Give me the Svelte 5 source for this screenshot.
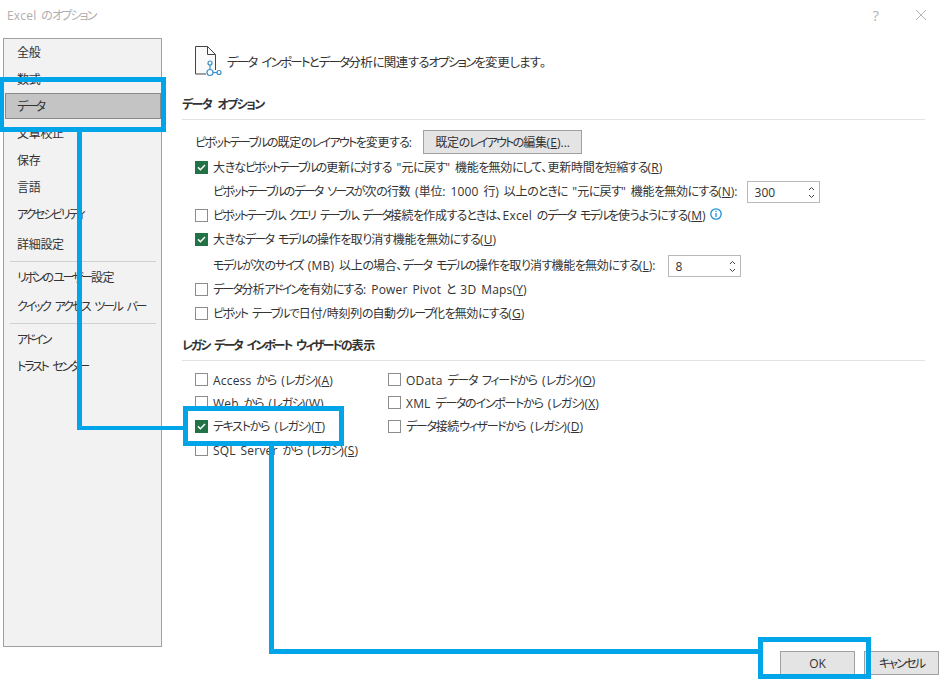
<script lang="ts">
  const navTop = [
    { label: "全般" },
    { label: "数式" },
    { label: "データ", active: true },
    { label: "文章校正" },
    { label: "保存" },
    { label: "言語" },
    { label: "アクセシビリティ" },
    { label: "詳細設定", cls: "gap" },
  ];
  const navMid = ["リボンのユーザー設定", "クイック アクセス ツール バー"];
  const navEnd = ["アドイン", "トラスト センター"];

  const legacyLeft = [
    { pre: "Access から (レガシ)(", key: "A", on: false },
    { pre: "Web から (レガシ)(", key: "W", on: false },
    { pre: "テキストから (レガシ)(", key: "T", on: true },
    { pre: "SQL Server から (レガシ)(", key: "S", on: false },
  ];
  const legacyRight = [
    { pre: "OData データ フィードから (レガシ)(", key: "O", on: false },
    { pre: "XML データのインポートから (レガシ)(", key: "X", on: false },
    { pre: "データ接続ウィザードから (レガシ)(", key: "D", on: false },
  ];

  function runs(text: string) {
    return text
      .split(/([\u30a0-\u30ff]+|[\u3040-\u309f]+|[\u4e00-\u9fff]+)/)
      .filter(Boolean)
      .map((t) => ({
        t,
        cls: /^[\u30a0-\u30ff]/.test(t)
          ? "kata"
          : /^[\u3040-\u309f]/.test(t)
            ? "hira"
            : /^[\u4e00-\u9fff]/.test(t)
              ? "kan"
              : "lat",
      }));
  }
</script>

{#snippet jp(text)}{#each runs(text) as r}<span class={r.cls}>{r.t}</span>{/each}{/snippet}

{#snippet box(on)}
  <span class="box" class:on>
    {#if on}
      <svg width="9" height="7" viewBox="0 0 9 7" fill="none" stroke="#fff" stroke-width="1.5"><path d="M1 3.4 3.4 5.7 8 1"/></svg>
    {/if}
  </span>
{/snippet}

{#snippet spinner()}
  <span class="spin">
    <svg width="7" height="5" viewBox="0 0 7 5" fill="none" stroke="#444" stroke-width="1"><path d="M1 4 3.5 1.5 6 4"/></svg>
    <svg width="7" height="5" viewBox="0 0 7 5" fill="none" stroke="#444" stroke-width="1"><path d="M1 1 3.5 3.5 6 1"/></svg>
  </span>
{/snippet}

<div class="dialog">
  <header class="titlebar">
    <span class="title">{@render jp("Excel のオプション")}</span>
    <span class="help">?</span>
    <svg class="close" width="12" height="12" viewBox="0 0 12 12" stroke="#b5b5b5" stroke-width="1"><path d="M1 1 11 11M11 1 1 11"/></svg>
  </header>

  <div class="body">
    <nav class="side">
      {#each navTop as item}
        <div class="nav {item.cls ?? ''}" class:active={item.active}>{@render jp(item.label)}</div>
      {/each}
      <div class="sep"></div>
      <div class="nav">{@render jp(navMid[0])}</div>
      <div class="nav second">{@render jp(navMid[1])}</div>
      <div class="sep"></div>
      {#each navEnd as label}
        <div class="nav">{@render jp(label)}</div>
      {/each}
    </nav>

    <main class="main">
      <div class="intro">
        <svg width="30" height="34" viewBox="0 0 30 34" fill="none">
          <path d="M12 30H1.5V2.5H13.5L21.5 10.5V26" fill="#fafafa" stroke="#444" stroke-width="1"/>
          <path d="M13.5 2.5V10.5H21.5" stroke="#444" stroke-width="1"/>
          <g stroke="#3a8fc8" stroke-width="1.2" fill="#fff">
            <path d="M16 21V26"/>
            <path d="M19 28.5H23"/>
            <circle cx="16" cy="19" r="2"/>
            <circle cx="16" cy="28.5" r="3"/>
            <circle cx="25" cy="28.5" r="2"/>
          </g>
        </svg>
        <span>{@render jp("データ インポートとデータ分析に関連するオプションを変更します。")}</span>
      </div>

      <h2 class="section first">{@render jp("データ オプション")}</h2>

      <div class="row layout-row">
        <span>{@render jp("ピボットテーブルの既定のレイアウトを変更する:")}</span>
        <button class="btn edit">{@render jp("既定のレイアウトの編集(")}<u>E</u>)...</button>
      </div>
      <div class="row check">
        {@render box(true)}
        <span>{@render jp('大きなピボットテーブルの更新に対する "元に戻す" 機能を無効にして、更新時間を短縮する(')}<u>R</u>)</span>
      </div>
      <div class="row sub">
        <span>{@render jp('ピボットテーブルのデータ ソースが次の行数 (単位: 1000 行) 以上のときに "元に戻す" 機能を無効にする(')}<u>N</u>):</span>
        <div class="field"><span>300</span>{@render spinner()}</div>
      </div>
      <div class="row check tight">
        {@render box(false)}
        <span>{@render jp("ピボットテーブル、クエリ テーブル、データ接続を作成するときは、Excel のデータ モデルを使うようにする(")}<u>M</u>)</span>
        <svg class="info" width="12" height="12" viewBox="0 0 12 12" fill="none" stroke="#1c8fd6"><circle cx="6" cy="6" r="5.2" stroke-width="1.3"/><path d="M6 5V9M6 2.8V4" stroke-width="1.3"/></svg>
      </div>
      <div class="row check">
        {@render box(true)}
        <span>{@render jp("大きなデータ モデルの操作を取り消す機能を無効にする(")}<u>U</u>)</span>
      </div>
      <div class="row sub lower">
        <span>{@render jp("モデルが次のサイズ (MB) 以上の場合、データ モデルの操作を取り消す機能を無効にする(")}<u>L</u>):</span>
        <div class="field"><span>8</span>{@render spinner()}</div>
      </div>
      <div class="row check">
        {@render box(false)}
        <span>{@render jp("データ分析アドインを有効にする: Power Pivot と 3D Maps(")}<u>Y</u>)</span>
      </div>
      <div class="row check">
        {@render box(false)}
        <span>{@render jp("ピボット テーブルで日付/時刻列の自動グループ化を無効にする(")}<u>G</u>)</span>
      </div>

      <h2 class="section second">{@render jp("レガシ データ インポート ウィザードの表示")}</h2>

      <div class="legacy">
        <div class="col">
          {#each legacyLeft as item}
            <div class="row check">
              {@render box(item.on)}
              <span>{@render jp(item.pre)}<u>{item.key}</u>)</span>
            </div>
          {/each}
        </div>
        <div class="col">
          {#each legacyRight as item}
            <div class="row check">
              {@render box(item.on)}
              <span>{@render jp(item.pre)}<u>{item.key}</u>)</span>
            </div>
          {/each}
        </div>
      </div>
    </main>
  </div>

  <footer class="footer">
    <button class="btn ok">OK</button>
    <button class="btn cancel">{@render jp("キャンセル")}</button>
  </footer>

  <!-- callouts drawn on top of the dialog -->
  <div class="mark mark-nav"></div>
  <div class="mark mark-check"></div>
  <div class="mark mark-ok"></div>
  <div class="line l1"></div>
  <div class="line l2"></div>
  <div class="line l3"></div>
  <div class="line l4"></div>
</div>

<style>
  :global(body) {
    margin: 0;
    background: #fff;
  }

  .dialog {
    position: relative;
    width: 944px;
    height: 679px;
    overflow: hidden;
    background: #fff;
    color: #333;
    font-family: "Open Sans", "Noto Sans CJK JP", sans-serif;
    font-size: 12px;
    font-feature-settings: "palt";
    word-spacing: 1.5px;
    display: flex;
    flex-direction: column;
  }

  .kata {
    letter-spacing: -1.8px;
  }

  .hira {
    letter-spacing: -1px;
  }

  .kan {
    letter-spacing: -0.3px;
  }

  .lat {
    letter-spacing: 0.2px;
  }

  .titlebar {
    height: 38px;
    flex: none;
    display: flex;
    align-items: center;
    padding: 0 17px 8px 7px;
    box-sizing: border-box;
    color: #b0aeae;
  }

  .title {
    flex: 1;
  }

  .help {
    font-size: 15px;
    margin-right: 36px;
    color: #b5b5b5;
  }

  .body {
    flex: 1;
    display: flex;
    min-height: 0;
  }

  .side {
    width: 159px;
    height: 609px;
    margin-left: 3px;
    box-sizing: border-box;
    border: 1px solid #a0a0a0;
    background: #f2f2f2;
    padding: 1px 0 1px 1px;
    flex: none;
  }

  .nav {
    height: 27px;
    line-height: 26px;
    padding-left: 12px;
    box-sizing: border-box;
  }

  .nav .kata {
    letter-spacing: -2.2px;
  }

  .nav.active {
    height: 26px;
    margin: -1px 0 2px;
    background: #c4c4c4;
    border: 1px solid #8a8a8a;
    padding-left: 11px;
    line-height: 26px;
  }

  .nav.gap {
    margin-top: 3px;
  }

  .nav.second {
    margin-top: 2px;
  }

  .sep {
    height: 1px;
    background: #d0d0d0;
    margin: 2px 5px 3px 5px;
  }

  .main {
    flex: 1;
    padding-left: 20px;
    padding-right: 19px;
    min-width: 0;
  }

  .intro {
    height: 38px;
    display: flex;
    align-items: center;
    gap: 3px;
    padding-left: 12px;
    margin-top: 4px;
    font-size: 12.5px;
  }

  .section {
    margin: 0;
    font-size: 12px;
    font-weight: 700;
    height: 24px;
    line-height: 20px;
    border-bottom: 1px solid #e2e2e2;
    color: #333;
  }

  .section.first {
    margin-top: 15px;
    word-spacing: 3px;
  }

  .section.first .kata {
    letter-spacing: -1.6px;
  }

  .section.second {
    margin-top: 11px;
  }

  .section.second .kata {
    letter-spacing: -2.1px;
  }

  .row {
    display: flex;
    align-items: center;
    height: 24px;
    white-space: nowrap;
  }

  .check {
    padding-left: 13px;
    gap: 5px;
  }

  .tight .kata {
    letter-spacing: -1.95px;
  }

  .sub {
    padding-left: 31px;
  }

  .sub.lower {
    margin-top: 2px;
  }

  .sub.lower .kata {
    letter-spacing: -1.6px;
  }

  .layout-row {
    padding-left: 13px;
    height: 26px;
    margin-top: 9px;
  }

  .layout-row > span .kata {
    letter-spacing: -1.65px;
  }

  .box {
    width: 13px;
    height: 13px;
    box-sizing: border-box;
    border: 1px solid #8c8c8c;
    background: #fff;
    display: inline-flex;
    align-items: center;
    justify-content: center;
    flex: none;
  }

  .box.on {
    background: #217346;
    border-color: #217346;
  }

  .btn {
    font: inherit;
    color: inherit;
    background: #e4e4e4;
    border: 1px solid #a0a0a0;
    box-sizing: border-box;
    padding: 0;
  }

  .edit {
    width: 159px;
    height: 24px;
    margin-left: 11px;
  }

  .field {
    width: 73px;
    height: 22px;
    margin: 2px 0 0 9px;
    box-sizing: border-box;
    border: 1px solid #b9b9b9;
    display: flex;
    align-items: center;
    justify-content: space-between;
    padding: 0 4px 0 7px;
  }

  .lower .field {
    margin-left: 12px;
  }

  .spin {
    display: flex;
    flex-direction: column;
    gap: 3px;
  }

  .info {
    margin: -2px 0 0 -1px;
  }

  .legacy {
    display: flex;
    margin-top: 7px;
  }

  .legacy .kata {
    letter-spacing: -1.3px;
  }

  .col:first-child {
    width: 193px;
  }

  .col .row {
    height: 23.3px;
  }

  .footer {
    height: 32px;
    flex: none;
    box-sizing: border-box;
    display: flex;
    justify-content: flex-end;
    gap: 9px;
    padding: 4px 5px 0 0;
  }

  .ok,
  .cancel {
    width: 75px;
    height: 24px;
  }

  .mark,
  .line {
    position: absolute;
    box-sizing: border-box;
  }

  .mark {
    border: 5px solid #00a4e8;
  }

  .line {
    background: #00a4e8;
  }

  .mark-nav {
    left: -1px;
    top: 77px;
    width: 167px;
    height: 55px;
  }

  .mark-check {
    left: 183px;
    top: 406px;
    width: 161px;
    height: 40px;
  }

  .mark-ok {
    left: 758px;
    top: 637px;
    width: 113px;
    height: 42px;
  }

  .l1 {
    left: 77px;
    top: 132px;
    width: 5px;
    height: 298px;
  }

  .l2 {
    left: 77px;
    top: 426px;
    width: 106px;
    height: 4px;
  }

  .l3 {
    left: 269px;
    top: 446px;
    width: 5px;
    height: 208px;
  }

  .l4 {
    left: 269px;
    top: 649px;
    width: 489px;
    height: 5px;
  }
</style>
